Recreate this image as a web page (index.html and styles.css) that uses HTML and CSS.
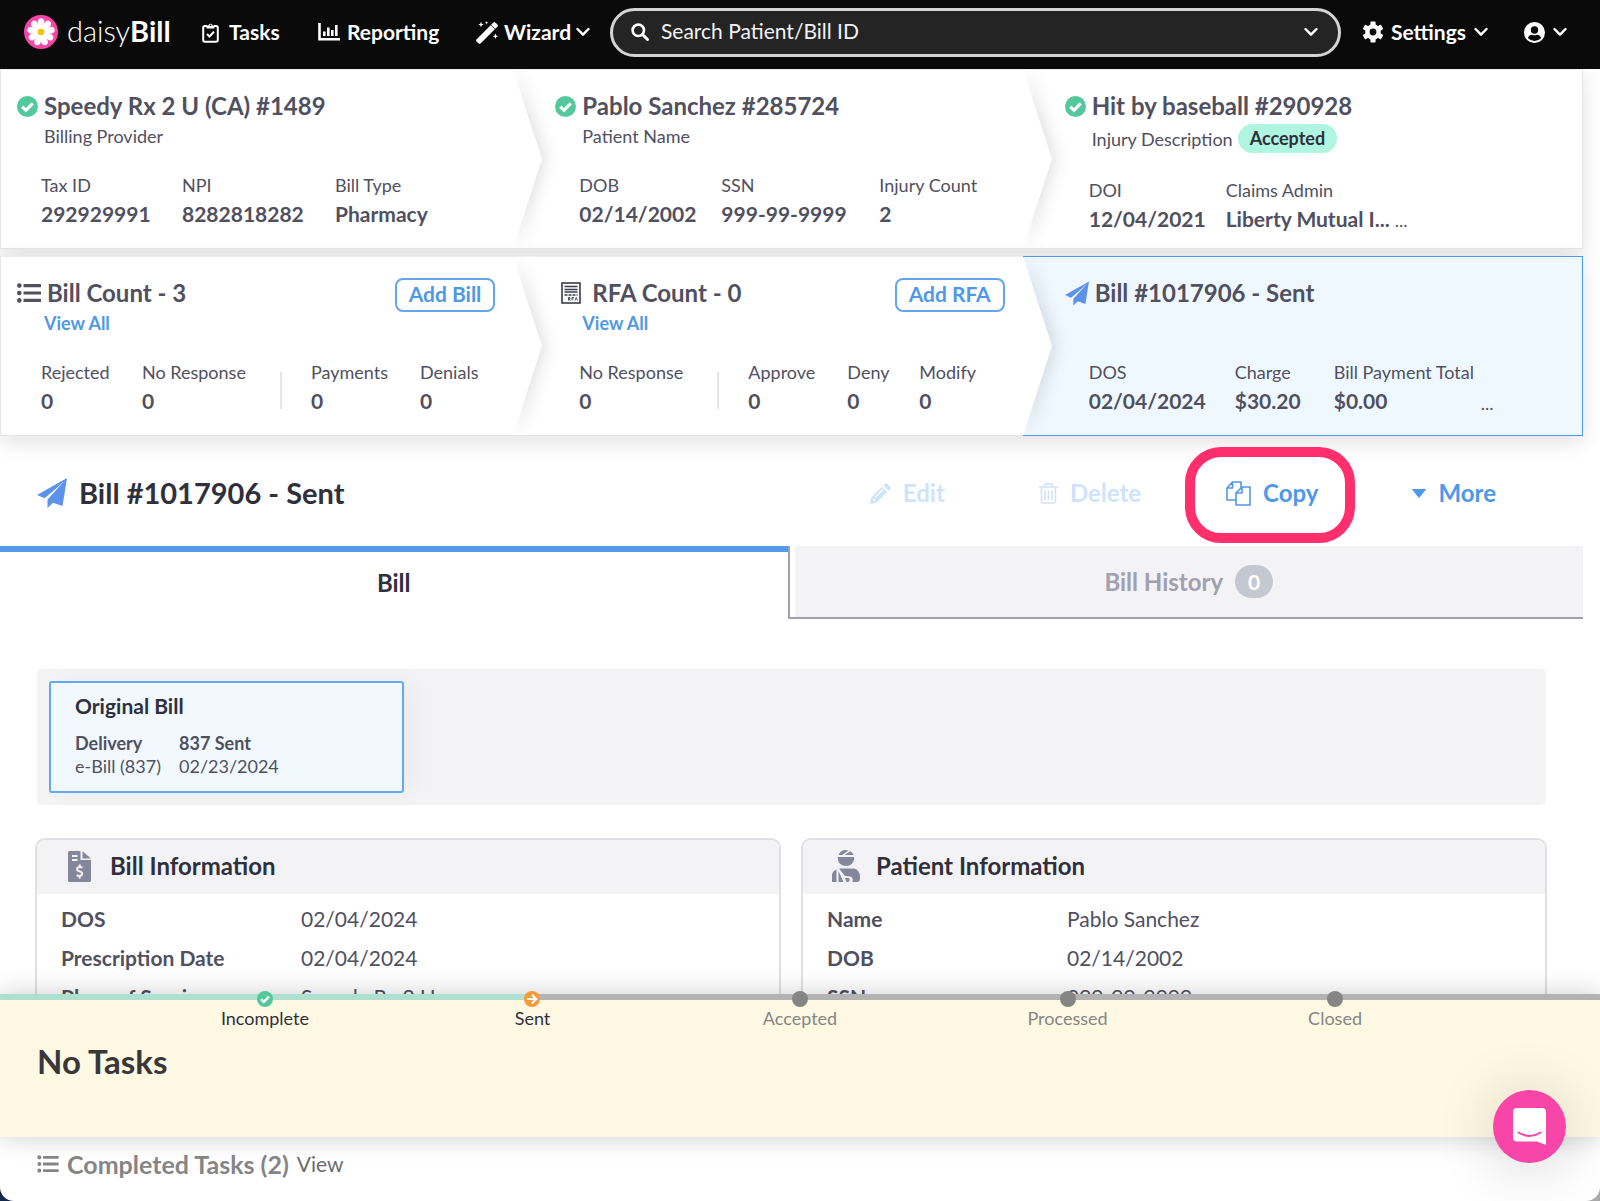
FILE: index.html
```html
<!DOCTYPE html>
<html lang="en">
<head>
<meta charset="utf-8">
<meta name="viewport" content="width=device-width, initial-scale=1">
<title>Bill #1017906 - daisyBill</title>
<link rel="stylesheet" href="styles.css">
</head>
<body>
<svg class="sprite" aria-hidden="true">
  <symbol id="chevron" viewBox="0 0 14 10"><path d="M1.500 2 7 7.600 12.500 2" fill="none" stroke="currentColor" stroke-width="2.400" stroke-linecap="round" stroke-linejoin="round"/></symbol>
  <symbol id="check" viewBox="0 0 20 20"><circle cx="10" cy="10" r="10" fill="#52c89c"/><path d="M5 10.200l3.500 3.400 6.500-6.600" fill="none" stroke="#fff" stroke-width="3"/></symbol>
  <symbol id="list" viewBox="0 0 24 20"><g fill="currentColor"><circle cx="2.300" cy="2.600" r="2.300"/><circle cx="2.300" cy="10" r="2.300"/><circle cx="2.300" cy="17.400" r="2.300"/><rect x="6.500" y="1" width="17.500" height="3.200" rx=".6"/><rect x="6.500" y="8.400" width="17.500" height="3.200" rx=".6"/><rect x="6.500" y="15.800" width="17.500" height="3.200" rx=".6"/></g></symbol>
  <symbol id="plane" viewBox="0 0 30 30"><path d="M30 0 0 17l7.500 3.300L24 6.500 10.500 21.600V30l5.500-5.200 9.500 3.200z" fill="#5b93ea"/><path d="M26 4 9.600 21.500" stroke="#fff" stroke-opacity=".75" stroke-width=".8"/></symbol>
  <symbol id="arrow" viewBox="0 0 30 180" preserveAspectRatio="none"><path d="M0 0 29 90 0 180z" fill="#fff"/></symbol>
</svg>

<header class="topbar">
  <a class="brand" href="#" aria-label="daisyBill">
    <svg width="34" height="34" viewBox="-17 -17 34 34"><circle r="17" fill="#f846a8"/><g fill="#fff"><path id="petal" d="M0 0C-2-4-3.600-8-3.300-11Q-2.500-14 0-13.800 2.500-14 3.300-11 3.600-8 0 0z"/><use href="#petal" transform="rotate(40)"/><use href="#petal" transform="rotate(80)"/><use href="#petal" transform="rotate(120)"/><use href="#petal" transform="rotate(160)"/><use href="#petal" transform="rotate(200)"/><use href="#petal" transform="rotate(240)"/><use href="#petal" transform="rotate(280)"/><use href="#petal" transform="rotate(320)"/><circle r="4.500"/></g><circle r="3.300" fill="#f5c400"/></svg>
    <span class="wordmark">daisy<b>Bill</b></span>
  </a>
  <nav class="nav">
    <a class="nav-link tasks" href="#"><svg width="17" height="21" viewBox="0 0 17 21"><path d="M5 4H3Q1.200 4 1.200 5.800V18Q1.200 19.800 3 19.800H14Q15.800 19.800 15.800 18V5.800Q15.800 4 14 4H12" fill="none" stroke="#fff" stroke-width="2"/><path d="M4.500 6.500V3.500H6.300A2.300 2.300 0 0 1 10.700 3.500H12.500V6.500z" fill="#fff"/><circle cx="8.500" cy="3.300" r=".9" fill="#0a0a0a"/><path d="M5 12l2.500 2.500L12 9.800" fill="none" stroke="#fff" stroke-width="2"/></svg>Tasks</a>
    <a class="nav-link reporting" href="#"><svg width="22" height="18" viewBox="0 0 22 18"><path d="M1.500 0V16.200H22" fill="none" stroke="#fff" stroke-width="2.600"/><path d="M6.300 8.500V13M10.300 4.500V13M14.300 7V13M18.300 2V13" stroke="#fff" stroke-width="2.600"/></svg>Reporting</a>
    <a class="nav-link wizard" href="#"><svg width="23" height="23" viewBox="0 0 23 23"><path d="M.8 18.600 14.800 4.600l3.600 3.600L4.400 22.200Q3.600 22.900 2.800 22.200L.8 20.200Q.1 19.400.8 18.600zM15.600 3.800l2-2q.8-.7 1.600 0l2 2q.7.8 0 1.600l-2 2z" fill="#fff" stroke="#fff" stroke-width=".8"/><path d="M5 .8l.8 1.900 1.900.8-1.900.8L5 6.200l-.8-1.900-1.900-.8 1.900-.8zM10.500 0l.5 1.300 1.300.5-1.300.5-.5 1.300-.5-1.300-1.300-.5L10 1.300zM19.500 12.500l.8 1.900 1.900.8-1.900.8-.8 1.900-.8-1.900-1.900-.8 1.900-.8z" fill="#fff"/></svg>Wizard<svg class="chev" width="14" height="10"><use href="#chevron"/></svg></a>
  </nav>
  <label class="search">
    <svg width="18" height="18" viewBox="0 0 18 18"><circle cx="7.300" cy="7.300" r="5.700" fill="none" stroke="#fff" stroke-width="2.600"/><path d="M11.500 11.500l5 5" stroke="#fff" stroke-width="3" stroke-linecap="round"/></svg>
    <input type="text" placeholder="Search Patient/Bill ID" aria-label="Search Patient/Bill ID">
    <svg width="14" height="10"><use href="#chevron"/></svg>
  </label>
  <a class="nav-link" href="#"><svg width="20" height="22" viewBox="-10 -11 20 22"><g fill="#fff"><rect x="-2.600" y="-10.500" width="5.200" height="21" rx="1"/><rect x="-2.600" y="-10.500" width="5.200" height="21" rx="1" transform="rotate(60)"/><rect x="-2.600" y="-10.500" width="5.200" height="21" rx="1" transform="rotate(120)"/><circle r="7.800"/></g><circle r="3.400" fill="#0a0a0a"/></svg>Settings<svg class="chev" width="14" height="10"><use href="#chevron"/></svg></a>
  <a class="nav-link account" href="#" aria-label="Account"><svg width="21" height="21" viewBox="0 0 21 21"><circle cx="10.500" cy="10.500" r="10.500" fill="#fff"/><circle cx="10.500" cy="8" r="3.700" fill="#0a0a0a"/><path d="M3.800 16q1.500-3.300 4.200-3.300 2.500 1 5 0 2.700 0 4.200 3.300-2.800 2.900-6.700 2.900T3.800 16z" fill="#0a0a0a"/></svg><svg class="chev" width="14" height="10"><use href="#chevron"/></svg></a>
</header>

<main class="content">
  <section class="steps">
    <article class="step first">
      <svg class="arrow"><use href="#arrow"/></svg>
      <h2 class="step-title"><svg width="21" height="21"><use href="#check"/></svg>Speedy Rx 2 U (CA) #1489</h2>
      <p class="step-sub">Billing Provider</p>
      <dl class="stats cols-provider"><div><dt>Tax ID</dt><dd>292929991</dd></div><div><dt>NPI</dt><dd>8282818282</dd></div><div><dt>Bill Type</dt><dd>Pharmacy</dd></div></dl>
    </article>
    <article class="step">
      <svg class="arrow"><use href="#arrow"/></svg>
      <h2 class="step-title"><svg width="21" height="21"><use href="#check"/></svg>Pablo Sanchez #285724</h2>
      <p class="step-sub">Patient Name</p>
      <dl class="stats cols-patient"><div><dt>DOB</dt><dd>02/14/2002</dd></div><div><dt>SSN</dt><dd>999-99-9999</dd></div><div><dt>Injury Count</dt><dd>2</dd></div></dl>
    </article>
    <article class="step last">
      <h2 class="step-title"><svg width="21" height="21"><use href="#check"/></svg>Hit by baseball #290928</h2>
      <p class="step-sub">Injury Description <span class="badge">Accepted</span></p>
      <dl class="stats cols-injury"><div><dt>DOI</dt><dd>12/04/2021</dd></div><div><dt>Claims Admin</dt><dd>Liberty Mutual I... <span class="more-dots">...</span></dd></div></dl>
    </article>
  </section>

  <section class="steps">
    <article class="step first">
      <svg class="arrow"><use href="#arrow"/></svg>
      <div class="step-head"><h2 class="step-title"><svg width="24" height="20"><use href="#list"/></svg>Bill Count - 3</h2><button class="add" type="button">Add Bill</button></div>
      <p class="step-sub"><a href="#">View All</a></p>
      <dl class="stats cols-bills"><div><dt>Rejected</dt><dd>0</dd></div><div><dt>No Response</dt><dd>0</dd></div><div class="ruled"><dt>Payments</dt><dd>0</dd></div><div><dt>Denials</dt><dd>0</dd></div></dl>
    </article>
    <article class="step rfa">
      <svg class="arrow"><use href="#arrow"/></svg>
      <div class="step-head"><h2 class="step-title"><svg width="20" height="22" viewBox="0 0 20 22"><rect x="1" y="1" width="18" height="20" fill="#fff" stroke="#3c3c4c" stroke-width="1.600"/><path d="M3.500 4.500h13M3.500 7.500h13M3.500 10h13" stroke="#3c3c4c" stroke-width="1.300"/><path d="M3.500 13h13" stroke="#3c3c4c" stroke-width="1.300" stroke-dasharray="3 1"/><path d="M7.500 18.500v-3h1.500v1.500h-1.500l2 1.500M11 18.500v-3h2M11 17h1.500M14 18.500l1.200-3 1.200 3" fill="none" stroke="#3c3c4c" stroke-width=".9"/></svg>RFA Count - 0</h2><button class="add" type="button">Add RFA</button></div>
      <p class="step-sub"><a href="#">View All</a></p>
      <dl class="stats cols-rfa"><div><dt>No Response</dt><dd>0</dd></div><div class="ruled"><dt>Approve</dt><dd>0</dd></div><div><dt>Deny</dt><dd>0</dd></div><div><dt>Modify</dt><dd>0</dd></div></dl>
    </article>
    <article class="step last active">
      <h2 class="step-title"><svg width="24" height="25"><use href="#plane"/></svg>Bill #1017906 - Sent</h2>
      <p class="step-sub"></p>
      <dl class="stats cols-bill"><div><dt>DOS</dt><dd>02/04/2024</dd></div><div><dt>Charge</dt><dd>$30.20</dd></div><div><dt>Bill Payment Total</dt><dd>$0.00</dd></div><div class="more-cell"><dd class="more-dots">...</dd></div></dl>
    </article>
  </section>

  <section class="bill-head">
    <h1><svg width="30" height="30"><use href="#plane"/></svg>Bill #1017906 - Sent</h1>
    <div class="actions">
      <button type="button" disabled><svg width="21" height="21" viewBox="0 0 21 21"><path d="M0 21l1.300-6.500L12 3.800l5.200 5.200L6.500 19.700zM13.300 2.500l2-2q.8-.7 1.600 0l3.600 3.600q.7.800 0 1.600l-2 2z" fill="currentColor"/><path d="M3 15.500l2.500 2.500M13 6.500l-7.500 7.500" stroke="#fff" stroke-width="1.200"/></svg>Edit</button>
      <button type="button" disabled><svg width="19" height="21" viewBox="0 0 19 21"><path d="M0 4h19M6 4V1h7v3M2.500 4v14.500q0 1.600 1.600 1.600h10.800q1.600 0 1.600-1.600V4M6 7.500v9.500M9.500 7.500v9.500M13 7.500v9.500" fill="none" stroke="currentColor" stroke-width="1.500"/></svg>Delete</button>
      <button class="copy" type="button"><svg width="25" height="25" viewBox="0 0 25 25"><path d="M10 19H1V7L6.500 1H15v6M6.500 1v6H1M10 12l6-6h8v18H10zM16 6v6h-6" fill="none" stroke="currentColor" stroke-width="1.600" stroke-linejoin="round"/></svg>Copy<span class="highlight"></span></button>
      <button type="button"><svg width="14" height="9" viewBox="0 0 14 9"><path d="M.5.500h13L7 8.500z" fill="currentColor" stroke="currentColor" stroke-linejoin="round"/></svg>More</button>
    </div>
  </section>

  <nav class="tabs">
    <a class="tab current" href="#">Bill</a>
    <a class="tab other" href="#"><span>Bill History <span class="count">0</span></span></a>
  </nav>

  <section class="strip">
    <article class="original">
      <h3>Original Bill</h3>
      <dl><div><dt>Delivery</dt><dd>e-Bill (837)</dd></div><div><dt>837 Sent</dt><dd>02/23/2024</dd></div></dl>
    </article>
  </section>

  <section class="cards">
    <article class="card">
      <h3><svg width="30" height="31" viewBox="0 0 30 31"><path d="M5 0h10.500v9H26v20.500q0 1.500-1.500 1.500h-20Q3 31 3 29.500v-28Q3 0 4.500 0zM17.500.3 26 7.500h-8.500z" fill="#84879b"/><path d="M7 5h5.500M7 9h5.500" stroke="#f3f3f5" stroke-width="2"/><path d="M17.500 16.700q-3-1.500-4.800 0-1.500 2 .7 3.200l2.500 1q2.200 1.300.7 3.200-2 1.600-5 0M14.700 13.500v2.500M14.700 24.500v3" fill="none" stroke="#f3f3f5" stroke-width="2"/></svg>Bill Information</h3>
      <table><tr><th scope="row">DOS</th><td>02/04/2024</td></tr><tr><th scope="row">Prescription Date</th><td>02/04/2024</td></tr><tr><th scope="row">Place of Service</th><td>Speedy Rx 2 U</td></tr></table>
    </article>
    <article class="card">
      <h3><svg width="30" height="32" viewBox="0 0 30 32"><g fill="#84879b"><path d="M7.500 5Q9.500 0 15 0l2.500.4L11 5zM13.500 5l6-3.700Q21.800 2.700 22.500 5zM6.800 7h16.400v2q-1 6.500-8.200 7Q7.700 15.500 6.800 9z"/><path d="M5.500 19.500V32H1v-7q.2-4 4.500-5.500zM8 18.500h15q6 1.500 6 8.500v2q-.3 3-3 3h-4.500q1.500-6-5-6H14zM7.500 21l5 11h-5zM14 28h3.500q2.500 1.500 0 4h-2z"/></g></svg>Patient Information</h3>
      <table><tr><th scope="row">Name</th><td>Pablo Sanchez</td></tr><tr><th scope="row">DOB</th><td>02/14/2002</td></tr><tr><th scope="row">SSN</th><td>999-99-9999</td></tr></table>
    </article>
  </section>
</main>

<footer class="dock">
  <section class="tasks-panel">
    <ol class="progress">
      <li class="done"><svg width="16" height="16"><use href="#check"/></svg>Incomplete</li>
      <li class="done"><svg width="16" height="16" viewBox="0 0 16 16"><circle cx="8" cy="8" r="8" fill="#f79b3a"/><path d="M3 8h9M8 3.800 12.200 8 8 12.200" fill="none" stroke="#fff" stroke-width="2.200"/></svg>Sent</li>
      <li><span class="dot"></span>Accepted</li>
      <li><span class="dot"></span>Processed</li>
      <li><span class="dot"></span>Closed</li>
    </ol>
    <h2>No Tasks</h2>
  </section>
  <div class="completed"><svg width="22" height="18" viewBox="0 0 24 20"><use href="#list"/></svg><b>Completed Tasks (2)</b><a href="#">View</a></div>
  <button class="chat" type="button" aria-label="Open chat"><svg width="33" height="37" viewBox="0 0 33 37"><path d="M4 0h25q4 0 4 4v33l-9-3.500H4q-4 0-4-4V4q0-4 4-4z" fill="#fff"/><path d="M5.500 24.500q11 7 22 0" fill="none" stroke="#f846a8" stroke-width="2" stroke-linecap="round"/></svg></button>
</footer>
</body>
</html>
```
FILE: styles.css
```css
:root {
  --ink: #50505f;
  --dark: #30303c;
  --blue: #4f98e9;
  --line: #e4e4ea;
  --gray: #f3f3f5;
}

* { box-sizing: border-box; }

body {
  margin: 0;
  height: 100vh;
  display: flex;
  flex-direction: column;
  overflow: hidden;
  background: linear-gradient(to right, #12294a 50%, #a8a8a8 50%);
  color: var(--ink);
  font: 18px/24px Lato, "Open Sans", sans-serif;
}

h1, h2, h3, p, dl, dd, ol { margin: 0; padding: 0; }
a { color: inherit; text-decoration: none; }
button { font: inherit; color: inherit; background: none; border: 0; padding: 0; cursor: pointer; }
svg { flex: none; display: block; }
.sprite { position: absolute; width: 0; height: 0; }

/* Top bar */
.topbar {
  flex: none;
  display: flex;
  align-items: center;
  height: 69px;
  padding: 0 33px 5px 24px;
  background: #0a0a0a;
  color: #fff;
}
.brand { display: flex; align-items: center; gap: 9px; width: 178px; }
.wordmark { padding-bottom: 3px; font-size: 29px; font-weight: 300; }
.wordmark b { font-weight: 700; }
.nav { display: flex; width: 408px; }
.nav-link { display: flex; align-items: center; gap: 8px; font-size: 21px; font-weight: 700; }
.nav-link.tasks { width: 116px; gap: 10px; }
.nav-link.reporting { width: 158px; gap: 7px; }
.nav-link.wizard { gap: 5px; }
.nav-link.account { margin-left: 36px; }
.search {
  flex: 1;
  display: flex;
  align-items: center;
  gap: 12px;
  height: 49px;
  margin-right: 22px;
  padding: 0 20px 0 18px;
  border: 3px solid #d4d4d4;
  border-radius: 25px;
  background: #242424;
}
.search input {
  flex: 1;
  min-width: 0;
  border: 0;
  padding: 0 0 2px;
  outline: 0;
  background: none;
  color: #fff;
  font: inherit;
  font-size: 21px;
}
.search input::placeholder { color: #f2f2f2; opacity: 1; }

/* Main area */
.content { flex: 1; min-height: 0; overflow: hidden; padding-right: 17px; background: #fff; }

.steps {
  display: grid;
  grid-template-columns: 513fr 510fr 560fr;
  height: 180px;
  margin-bottom: 7px;
  border: 1px solid var(--line);
  border-top-color: #eeeef2;
  box-shadow: 0 6px 20px rgba(0, 0, 0, .12);
  background: #fff;
}
.step { position: relative; padding: 23px 18px 0 42px; }
.step.first { padding-left: 16px; z-index: 2; }
.step:nth-child(2) { z-index: 1; }
.arrow {
  position: absolute;
  left: 100%;
  top: 0;
  width: 30px;
  height: 100%;
  overflow: visible;
  filter: drop-shadow(4px 0 8px rgba(0, 0, 0, .12));
  clip-path: inset(0 -30px 0 0);
}
.step.active { margin: -1px -1px -1px 0; border: 1px solid var(--blue); border-left: 0; background: #f0f8ff; }
.step-head { display: flex; justify-content: space-between; height: 26px; }
.step-title {
  display: flex;
  align-items: center;
  gap: 6px;
  height: 26px;
  font-size: 24px;
  font-weight: 700;
  white-space: nowrap;
}
.step.rfa { padding-left: 48px; }
.rfa .step-title { gap: 11px; }
.step-sub { display: flex; align-items: center; gap: 5px; min-height: 24px; margin: 5px 0 0 27px; white-space: nowrap; }
.step-sub a { color: var(--blue); font-weight: 700; }
.rfa .step-sub { margin-left: 21px; }
.badge { padding: 2px 12px 3px; border-radius: 15px; background: #aff5df; color: var(--dark); font-weight: 700; }
.add {
  flex: none;
  height: 34px;
  margin-top: -2px;
  padding: 0 12px 2px;
  border: 2px solid #63a5ee;
  border-radius: 8px;
  color: var(--blue);
  font-size: 21px;
  font-weight: 700;
}
.stats { display: grid; margin: 25px 0 0 24px; white-space: nowrap; }
.rfa .stats { margin-left: 18px; }
.stats dd { margin-top: 5px; font-size: 21px; font-weight: 700; }
.stats .more-dots { font-size: 18px; font-weight: 400; }
.more-cell { padding-top: 26px; }
.cols-provider { grid-template-columns: 141px 153px 1fr; }
.cols-patient { grid-template-columns: 142px 158px 1fr; }
.cols-injury { grid-template-columns: 137px 1fr; }
.cols-bills { grid-template-columns: 101px 169px 109px 1fr; }
.cols-rfa { grid-template-columns: 169px 99px 72px 1fr; }
.cols-bill { grid-template-columns: 146px 99px 147px 1fr; }
.ruled { position: relative; }
.ruled::before { content: ""; position: absolute; left: -31px; top: 12px; height: 37px; border-left: 2px solid var(--line); }

/* Bill heading */
.bill-head { display: flex; align-items: center; justify-content: space-between; height: 103px; padding: 0 87px 3px 37px; }
.bill-head h1 { display: flex; align-items: center; gap: 12px; color: var(--dark); font-size: 29px; font-weight: 700; }
.actions { display: flex; color: var(--blue); font-size: 24px; font-weight: 700; }
.actions button { position: relative; display: flex; align-items: center; gap: 12px; margin-left: 94px; }
.actions button:disabled { color: #cfe3fa; }
.actions button.copy { margin-left: 85px; }
.highlight {
  position: absolute;
  inset: -34px -37px -37px -41px;
  border: 10px solid #ff2e6c;
  border-radius: 36px;
}

/* Tabs */
.tabs { display: grid; grid-template-columns: 1fr 1fr; height: 73px; font-size: 24px; font-weight: 700; }
.tab { display: flex; justify-content: center; align-items: center; }
.tab.current { border-top: 6px solid #5599e8; padding-bottom: 6px; color: var(--dark); margin-right: 4px; }
.tab.other { margin-left: -4px; border-left: 2px solid #a0a0b2; border-bottom: 2px solid #a0a0b2; color: #a0a0b0; padding-left: 5px; }
.tab.other > span { flex: 1; height: 100%; display: flex; gap: 12px; align-items: center; justify-content: center; background: var(--gray); }
.count { width: 38px; height: 33px; border-radius: 17px; background: #c5c7d1; color: #fff; font-size: 21px; line-height: 33px; text-align: center; }

/* Submissions */
.strip { margin: 50px 37px 0 37px; padding: 12px; border-radius: 5px; background: var(--gray); }
.original { width: 355px; height: 112px; padding: 11px 24px; border: 2px solid #63a9f6; border-radius: 3px; background: #f1f9ff; box-shadow: 12px 0 24px rgba(0, 0, 0, .03); }
.original h3 { color: var(--dark); font-size: 21px; font-weight: 700; }
.original dl { display: flex; gap: 18px; margin-top: 14px; line-height: 23px; white-space: nowrap; }
.original dt { font-weight: 700; }

/* Detail cards */
.cards { display: grid; grid-template-columns: 1fr 1fr; gap: 20px; margin: 33px 36px 0 35px; }
.card { border: 2px solid #dfdfe6; border-radius: 10px; overflow: hidden; min-height: 300px; }
.card h3 { display: flex; align-items: center; gap: 15px; height: 54px; padding: 0 0 2px 28px; background: var(--gray); color: var(--dark); font-size: 24px; font-weight: 700; }
.card table { margin: 5px 0 0 24px; border-collapse: collapse; font-size: 21px; }
.card th { width: 240px; height: 39px; padding: 0; text-align: left; font-weight: 700; }
.card td { padding: 0; }

/* Docked task panel */
.dock { position: relative; flex: none; height: 207px; border-radius: 0 0 14px 14px; background: #fff; }
.dock::before { content: ""; position: absolute; inset: 0 0 50% 0; background: #fff; }
.tasks-panel {
  position: relative;
  height: 143px;
  border-top: 6px solid;
  border-image: linear-gradient(to right, #aee0cf 33.3%, #b3b3b3 33.3%) 6;
  background: #fff9e4;
  box-shadow: 0 0 24px rgba(0, 0, 0, .2);
}
.progress { display: grid; grid-template-columns: repeat(5, 1fr); padding: 0 8.2%; list-style: none; color: #858585; }
.progress li { display: flex; flex-direction: column; align-items: center; margin-top: -9px; line-height: 22px; }
.progress li.done { color: var(--dark); }
.dot { width: 16px; height: 16px; border-radius: 8px; background: #858585; }
.tasks-panel h2 { margin: 15px 0 0 37px; color: #383838; font-size: 33px; line-height: 34px; font-weight: 700; }
.completed { display: flex; align-items: center; gap: 8px; height: 54px; padding-left: 37px; color: #858585; font-size: 25px; position: relative; }
.completed a { color: #6c6c6c; font-size: 21px; }
.chat {
  position: absolute;
  right: 34px;
  bottom: 38px;
  width: 73px;
  height: 73px;
  display: grid;
  place-items: center;
  border-radius: 50%;
  background: #f846a8;
  box-shadow: 0 4px 60px rgba(0, 0, 0, .18);
}
```
